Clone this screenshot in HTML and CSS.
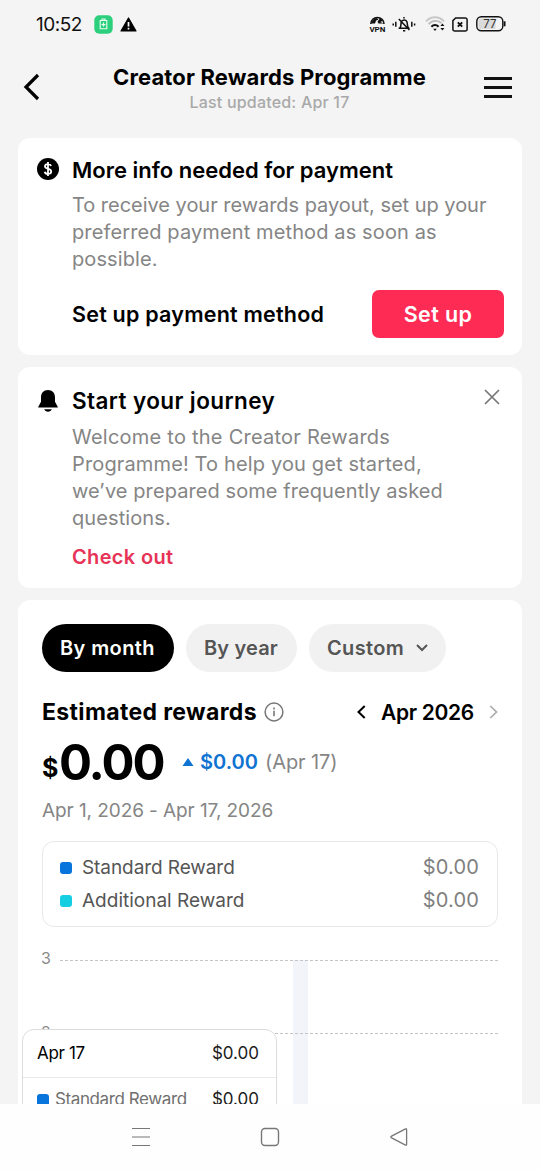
FILE: index.html
```html
<!DOCTYPE html>
<html lang="en">
<head>
<meta charset="utf-8">
<title>Creator Rewards Programme</title>
<link rel="stylesheet" href="styles.css">
</head>
<body>
<div class="phone">
  <div class="status">
    <span class="clock">10:52</span>
    <svg class="s-batt" width="19" height="19" viewBox="0 0 19 19"><rect x=".3" y=".3" width="18.4" height="18.4" rx="5" fill="#2bcf7c"/><path d="M6.2 5.500h6.600v8.200H6.200zM8 5V4h3v1M9.500 7.500v4M7.500 9.600h4" fill="none" stroke="#e8fff2" stroke-width="1.100"/></svg>
    <svg class="s-warn" width="17" height="15" viewBox="0 0 17 15"><path d="M8.500 1 16 14H1z" fill="#000" stroke="#000" stroke-width="1.200" stroke-linejoin="round"/><path d="M8.500 5v4.400M8.500 10.800v1.600" stroke="#fff" stroke-width="1.700"/></svg>
    <span class="spring"></span>
    <svg class="s-vpn" width="18" height="17" viewBox="0 0 18 17"><path d="M1.800 8A6.600 6.600 0 0 1 15 8" fill="none" stroke="#111" stroke-width="1.500"/><path d="M2 7.500c1-3 3-5.500 6-5.500l1.400 1.800-2.300.7L6 7.500zM11 2l3 2.800-2.600 1.100L14.600 7.500H9.500l-1-1.700z" fill="#111"/><text class="vpn" x="8.400" y="15.800" text-anchor="middle">VPN</text></svg>
    <svg class="s-bell" width="24" height="17" viewBox="0 0 24 17"><path d="M6.600 12.200h11M8 12c1.300-1.800.8-4.600 1.200-6A3.200 3.200 0 0 1 15 5.800c.4 2 .1 4.200 1.400 6.200M12 1v1.600M6.800 3l10.600 11M11 14.800h2.300" fill="none" stroke="#111" stroke-width="1.500"/><path d="M1.200 7.500v2M3.800 5.800v5M19.800 5.800v5M22.600 7.500v2" stroke="#111" stroke-width="1.500"/></svg>
    <svg class="s-wifi" width="21" height="17" viewBox="0 0 21 17"><path d="M1 5.300C6-.2 14-.2 19 5.300" fill="none" stroke="#c8c8c8" stroke-width="1.900"/><path d="M3.600 8.200c3.600-4.300 9.800-4.300 12.900-1" fill="none" stroke="#bbb" stroke-width="1.700"/><path d="M6.400 10.700c2.200-2.400 5-2.400 7.200 0" fill="none" stroke="#111" stroke-width="2"/><path d="M8.200 12.800h3.600L10 15zM15.400 10l2-2.600 2 2.600zM15.400 12l2 2.600 2-2.600z" fill="#111"/></svg>
    <svg class="s-sim" width="16" height="15" viewBox="0 0 16 15"><path d="M3.600.9h9.600a1.800 1.800 0 0 1 1.900 1.900v9.400a1.800 1.800 0 0 1-1.900 1.900H2.800A1.800 1.800 0 0 1 .9 12.200V3.600z" fill="none" stroke="#111" stroke-width="1.500"/><path d="m5.800 5.300 4.400 4.400m0-4.400L5.800 9.700" stroke="#111" stroke-width="1.900"/></svg>
    <svg class="s-level" width="31" height="16" viewBox="0 0 31 16"><rect x=".8" y=".8" width="26" height="14" rx="4.500" fill="#f4f4f4" stroke="#111" stroke-width="1.400"/><path d="M4.500 2.500h15v10.600h-15a2 2 0 0 1-2-2V4.500a2 2 0 0 1 2-2z" fill="#dadada"/><path d="M28.600 5.300v5" stroke="#111" stroke-width="1.800"/><text class="pct" x="13.800" y="12.100" text-anchor="middle">77</text></svg>
  </div>

  <header class="header">
    <svg class="back" width="18" height="28" viewBox="0 0 18 28"><path d="M16 2 4 14l12 12" fill="none" stroke="#000" stroke-width="3.200"/></svg>
    <div class="heading"><h1><span class="t-head">Creator Rewards Programme</span></h1><p><span class="t-upd">Last updated: Apr 17</span></p></div>
    <svg class="menu" width="30" height="24" viewBox="0 0 30 24"><path d="M1 2.500h28M1 11.500h28M1 20.500h28" stroke="#111" stroke-width="3"/></svg>
  </header>

  <main class="cards">
    <section class="card notice pay">
      <svg class="icon" width="22" height="22" viewBox="0 0 22 22"><circle cx="11" cy="11" r="11" fill="#000"/><path d="M14.100 8c-.4-1.300-1.500-1.900-3.100-1.900-1.800 0-3 .8-3 2.200 0 1.600 1.400 2.100 3 2.500 1.800.4 3.200 1 3.200 2.700 0 1.500-1.300 2.400-3.200 2.400-1.800 0-3-.8-3.300-2.200M11 4v14" fill="none" stroke="#fff" stroke-width="1.800"/></svg>
      <div class="content">
        <h2><span class="t-more">More info needed for payment</span></h2>
        <p class="copy"><span class="p1">To receive your rewards payout, set up your</span><br><span class="p2">preferred payment method as soon as</span><br><span class="p3">possible.</span></p>
        <div class="action"><strong class="t-setm">Set up payment method</strong><button class="setup">Set up</button></div>
      </div>
    </section>

    <section class="card notice start">
      <svg class="icon" width="22" height="24" viewBox="0 0 22 24"><path d="M11 1c-4.300 0-7 3-7 7.200v4.600L1.200 18v.4h19.600V18L18 12.800V8.200C18 4 15.300 1 11 1z" fill="#000"/><path d="M7.200 20.200h7.600c-.6 1.600-2 2.500-3.800 2.500s-3.200-.9-3.800-2.500z" fill="#000"/></svg>
      <div class="content">
        <h2><span class="t-start">Start your journey</span></h2>
        <p class="copy"><span class="q1">Welcome to the Creator Rewards</span><br><span class="q2">Programme! To help you get started,</span><br><span class="q3">we’ve prepared some frequently asked</span><br><span class="q4">questions.</span></p>
        <a class="check">Check out</a>
      </div>
      <svg class="close" width="16" height="16" viewBox="0 0 16 16"><path d="m1 1 14 14M15 1 1 15" stroke="#777" stroke-width="1.700"/></svg>
    </section>

    <section class="card stats">
      <div class="tabs">
        <span class="tab on"><span class="t-mon">By month</span></span><span class="tab yr"><span class="t-yr">By year</span></span><span class="tab cu"><span class="t-cus">Custom</span><svg width="12" height="8" viewBox="0 0 12 8"><path d="m1 1 5 5 5-5" fill="none" stroke="#555" stroke-width="2"/></svg></span>
      </div>
      <div class="est">
        <h3 class="t-est">Estimated rewards</h3>
        <svg class="info" width="20" height="20" viewBox="0 0 20 20"><circle cx="10" cy="10" r="8.900" fill="none" stroke="#777" stroke-width="1.500"/><path d="M10 8.800v5.400M10 5.400v2" stroke="#777" stroke-width="1.600"/></svg>
        <span class="spring"></span>
        <svg width="9" height="14" viewBox="0 0 9 14"><path d="M7.700 1 1.500 7l6.200 6" fill="none" stroke="#000" stroke-width="2"/></svg>
        <span class="t-apr">Apr 2026</span>
        <svg width="9" height="14" viewBox="0 0 9 14"><path d="m1.300 1 6.200 6-6.200 6" fill="none" stroke="#aaa" stroke-width="1.700"/></svg>
      </div>
      <div class="amount"><span class="cur">$</span><span class="big">0.00</span><svg width="12" height="8" viewBox="0 0 12 8"><path d="M6 0 11.500 8H.5z" fill="#0f73d2"/></svg><span class="delta">$0.00</span><span class="day">(Apr 17)</span></div>
      <p class="range"><span class="t-range">Apr 1, 2026 - Apr 17, 2026</span></p>
      <div class="legend">
        <div class="row"><i class="dot"></i><span class="t-std">Standard Reward</span><span class="val">$0.00</span></div>
        <div class="row"><i class="dot cyan"></i><span class="t-add">Additional Reward</span><span class="val">$0.00</span></div>
      </div>
      <div class="chart">
        <svg class="plot" width="456" height="165" viewBox="0 0 456 165"><path d="M251 21h15v144h-15z" fill="#f3f4fa"/><path d="M18 21.500h438M18 94.500h438" stroke="#c4c4c4" stroke-dasharray="3 2"/><text class="tick" x="-1" y="25">3</text><text class="tick" x="-1" y="99">2</text></svg>
        <div class="tooltip">
          <div class="tip-head"><span class="t-day">Apr 17</span><span class="tv">$0.00</span></div>
          <div class="tip-row"><i class="dot"></i><span class="t-tstd">Standard Reward</span><span class="tv">$0.00</span></div>
        </div>
      </div>
    </section>
  </main>

  <nav class="nav">
    <svg width="20" height="20" viewBox="0 0 20 20"><path d="M1 1.500h18M1 10h18M1 18.500h18" stroke="#777" stroke-width="1.200"/></svg>
    <svg width="20" height="20" viewBox="0 0 20 20"><rect x="1.500" y="1.500" width="17" height="17" rx="3.500" fill="none" stroke="#777" stroke-width="1.400"/></svg>
    <svg width="20" height="20" viewBox="0 0 20 20"><path d="M16.500 1.900 2.600 9.100q-1.600.9 0 1.800l13.900 7.200q1.100.4 1.100-.8V2.700q0-1.200-1.100-.8z" fill="none" stroke="#777" stroke-width="1.300"/></svg>
  </nav>
</div>
</body>
</html>
```
FILE: styles.css
```css
* { box-sizing: border-box; }
body { margin: 0; background: #f4f4f4; font-family: Inter, Roboto, sans-serif; color: #000; }
h1, h2, h3, p { margin: 0; font-weight: 600; }
svg { display: block; flex: none; }
.phone { width: 540px; height: 1170px; overflow: hidden; display: flex; flex-direction: column; white-space: nowrap; }
.spring { flex: 1; }

.status { height: 48px; flex: none; display: flex; align-items: center; padding: 0 33px 0 36px; }
.clock { font-size: 19px; width: 58px; letter-spacing: -0.5px; color: #111; }
.s-warn { margin-left: 7px; }
.s-bell { margin-left: 5px; }
.s-wifi { margin-left: 9px; }
.s-sim { margin-left: 6px; }
.s-level { margin-left: 8px; }
.vpn { font-family: Roboto, sans-serif; font-size: 8px; font-weight: 700; fill: #111; }
.pct { font-size: 11.500px; fill: #333; }

.header { height: 90px; flex: none; display: flex; align-items: flex-start; padding: 0 27px 0 22px; }
.back { margin-top: 25px; }
.menu { margin-top: 28px; }
.heading { flex: 1; text-align: center; padding-left: 16px; padding-top: 15px; }
.heading h1 { font-size: 22px; line-height: 28px; font-weight: 700; letter-spacing: 0.15px; }
.heading p { font-size: 16px; line-height: 22px; color: #a9a9a9; font-weight: 500; letter-spacing: 0.2px; }

.cards { flex: 1; min-height: 0; overflow: hidden; padding: 0 18px; display: flex; flex-direction: column; gap: 12px; }
.card { background: #fff; border-radius: 12px; flex: none; }
.notice { display: flex; padding: 0 18px 0 19px; }
.pay { height: 217px; padding-top: 18px; }
.start { height: 221px; padding-top: 20px; }
.icon { margin-top: 2px; margin-right: 13px; }
.content { flex: 1; min-width: 0; }
.notice h2 { font-size: 22px; line-height: 28px; }
.copy { font-size: 20px; line-height: 27px; color: #858585; font-weight: 400; margin-top: 8px; }
.p1 { letter-spacing: -0.03px; }
.p2 { letter-spacing: 0.12px; }
.p3 { letter-spacing: 0.1px; }
.q1 { letter-spacing: 0.24px; }
.q2 { letter-spacing: 0.14px; }
.q3 { letter-spacing: 0.08px; }
.q4 { letter-spacing: 0.1px; }
.action { display: flex; justify-content: space-between; align-items: center; margin-top: 17px; height: 48px; font-size: 21.500px; }
.action strong { font-weight: 600; letter-spacing: 0.22px; }
.setup { width: 132px; height: 48px; border: 0; border-radius: 7px; background: #fe2c55; color: #fff; font: 600 21.500px Inter, sans-serif; letter-spacing: 0.4px; }
.start h2 { font-size: 22.500px; letter-spacing: 0.4px; }
.start .copy { margin-top: 9px; }
.check { display: block; margin-top: 11px; font-size: 20px; line-height: 28px; color: #e73357; font-weight: 600; letter-spacing: 0.35px; }
.close { margin: 2px 4px 0 0; }

.stats { padding: 24px 24px 0; height: 560px; }
.tabs { display: flex; gap: 12px; height: 48px; }
.tab { display: flex; align-items: center; padding: 0 18px; border-radius: 24px; background: #f1f1f1; color: #555; font-size: 20px; font-weight: 600; }
.tab.on { background: #000; color: #fff; width: 132px; letter-spacing: 0.4px; }
.yr { width: 111px; letter-spacing: 0.15px; }
.cu { width: 137px; justify-content: space-between; letter-spacing: 0.35px; }
.est { display: flex; align-items: center; height: 30px; margin-top: 25px; }
.t-est { font-size: 23px; font-weight: 700; letter-spacing: 0.35px; }
.info { margin-left: 7px; }
.t-apr { font-size: 21px; font-weight: 600; margin: 0 15px; letter-spacing: -0.3px; }
.amount { display: flex; align-items: center; height: 56px; margin-top: 7px; }
.cur { font-size: 25px; font-weight: 700; padding-top: 12px; width: 17px; }
.big { font-size: 49px; font-weight: 700; width: 123px; letter-spacing: -2px; }
.delta { font-size: 20px; font-weight: 600; color: #0f73d2; margin-left: 6px; width: 65px; }
.day { font-size: 20px; color: #858585; letter-spacing: -0.1px; }
.range { font-size: 19px; line-height: 28px; color: #858585; font-weight: 400; margin-top: 7px; letter-spacing: -0.08px; }
.legend { margin-top: 16px; height: 86px; border: 1.500px solid #e8e8e8; border-radius: 12px; padding: 9px 18px 9px 17px; }
.row { display: flex; align-items: center; height: 33px; font-size: 19px; color: #555; }
.t-std { letter-spacing: -0.08px; }
.dot { width: 12px; height: 12px; border-radius: 3px; background: #0875dd; margin-right: 10px; flex: none; }
.cyan { background: #16cee2; }
.val { margin-left: auto; font-size: 20px; color: #808080; letter-spacing: 0.15px; margin-top: -1px; }
.chart { position: relative; height: 165px; margin-top: 12px; }
.tick { font-size: 16px; fill: #8b8b8b; }
.tooltip { position: absolute; left: -20px; top: 90px; width: 255px; height: 140px; background: #fff; border: 1px solid #dcdcdc; border-radius: 12px; font-size: 17px; }
.tip-head { display: flex; align-items: center; justify-content: space-between; height: 48px; padding: 0 17px 2px 14px; border-bottom: 1px solid #e9e9e9; }
.t-day { letter-spacing: -0.35px; }
.tip-row { display: flex; align-items: center; height: 41px; padding: 0 17px 0 14px; color: #707070; }
.t-tstd { letter-spacing: -0.4px; }
.tip-row .dot { margin-right: 6px; margin-top: 3px; }
.tip-row .tv { margin-left: auto; }
.tv { color: #1b1b1b; }

.nav { height: 66px; flex: none; background: #fefefe; display: flex; justify-content: center; gap: 109px; padding-top: 23px; }
```
